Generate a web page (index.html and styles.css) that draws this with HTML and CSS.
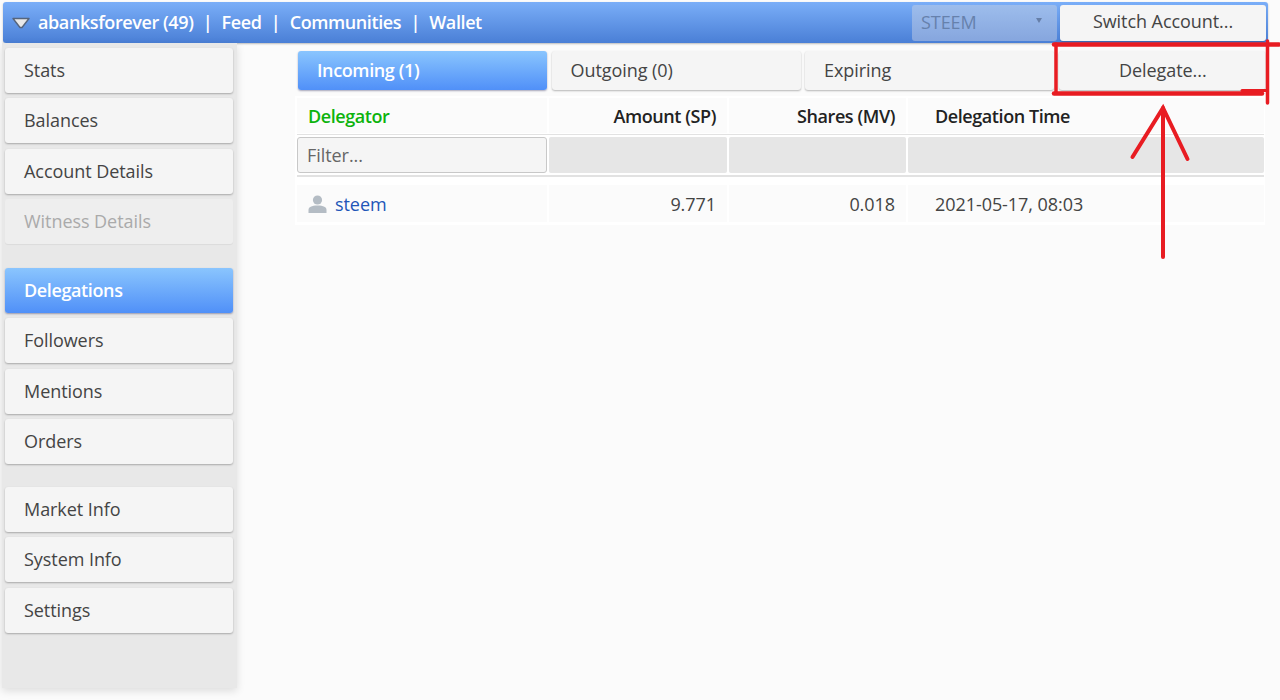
FILE: index.html
```html
<!DOCTYPE html>
<html lang="en">
<head>
<meta charset="utf-8">
<title>Delegations</title>
<link rel="stylesheet" href="styles.css">
</head>
<body>
<header class="topbar">
  <svg class="caret" width="18" height="12" viewBox="0 0 18 12"><path d="M1 1.500h16L10 10.500H8z" fill="#e9e9e9" stroke="#56657c" stroke-width="1.400" stroke-linejoin="round"/></svg>
  <nav class="topnav">
    <a>abanksforever (49)</a><span class="sep">|</span>
    <a>Feed</a><span class="sep">|</span>
    <a>Communities</a><span class="sep">|</span>
    <a>Wallet</a>
  </nav>
  <div class="chain"><span>STEEM</span><i class="chain-arrow"></i></div>
  <button class="switch">Switch Account...</button>
</header>
<div class="main">
  <aside class="sidebar">
    <div class="group">
      <a class="item">Stats</a>
      <a class="item">Balances</a>
      <a class="item">Account Details</a>
      <a class="item disabled">Witness Details</a>
    </div>
    <div class="group">
      <a class="item active">Delegations</a>
      <a class="item">Followers</a>
      <a class="item">Mentions</a>
      <a class="item">Orders</a>
    </div>
    <div class="group last">
      <a class="item">Market Info</a>
      <a class="item">System Info</a>
      <a class="item">Settings</a>
    </div>
  </aside>
  <section class="content">
    <div class="tabs">
      <a class="tab active">Incoming (1)</a>
      <a class="tab">Outgoing (0)</a>
      <a class="tab">Expiring</a>
      <a class="tab center">Delegate...</a>
    </div>
    <div class="table">
      <div class="row head">
        <div class="cell sorted">Delegator</div>
        <div class="cell right">Amount (SP)</div>
        <div class="cell right">Shares (MV)</div>
        <div class="cell time">Delegation Time</div>
      </div>
      <div class="row filters">
        <div class="fcell"><div class="filter">Filter...</div></div>
        <div class="fcell blank"></div>
        <div class="fcell blank"></div>
        <div class="fcell blank"></div>
      </div>
      <div class="row data">
        <div class="cell user">
          <svg class="avatar" width="19" height="18" viewBox="0 0 19 18"><circle cx="9.500" cy="5" r="4.600" fill="#b4bcc4"/><path d="M.5 18v-3c0-3 3-4.500 9-4.500s9 1.500 9 4.500v3z" fill="#b4bcc4"/></svg>
          <a>steem</a>
        </div>
        <div class="cell right">9.771</div>
        <div class="cell right">0.018</div>
        <div class="cell time">2021-05-17, 08:03</div>
      </div>
    </div>
  </section>
</div>
<svg class="annotation" width="1280" height="700" viewBox="0 0 1280 700" fill="none" stroke="#e81c22" stroke-linecap="round">
  <path d="M1054 44.500H1279" stroke-width="4.500"/>
  <path d="M1056 44V92" stroke-width="3.500"/>
  <path d="M1054 93.500H1262" stroke-width="4.500"/>
  <path d="M1242 90.500H1267" stroke-width="3"/>
  <path d="M1267.500 41V103" stroke-width="3.500"/>
  <path d="M1163 108V257" stroke-width="4"/>
  <path d="M1132.500 157L1163 108L1187.500 159" stroke-width="4"/>
</svg>
</body>
</html>
```
FILE: styles.css
```css
* { box-sizing: border-box; }
html, body { margin: 0; height: 700px; overflow: hidden; }
body {
  position: relative;
  background: #fbfbfb;
  font-family: "Open Sans", "Liberation Sans", sans-serif;
  font-size: 18px;
  letter-spacing: -.06px;
  color: #444;
}
.topbar {
  display: flex;
  align-items: center;
  height: 41px;
  margin: 2px 12px 0 3px;
  padding: 0 2px 0 9px;
  border-radius: 3px;
  background: linear-gradient(#7aaef8, #4a7fd6);
  box-shadow: 0 1px 2px rgba(0,0,0,.25);
}
.caret { margin-right: 8px; flex: none; }
.topnav {
  display: flex;
  gap: 9.300px;
  flex: 1;
  padding-bottom: 2px;
  color: #fff;
  font-weight: 600;
  letter-spacing: -.4px;
  white-space: nowrap;
}
.sep { font-weight: 600; }
.chain {
  display: flex;
  align-items: center;
  justify-content: space-between;
  width: 145px;
  height: 36px;
  padding: 0 15px 2px 9px;
  border-radius: 3px;
  background: linear-gradient(#9dbdec, #86a6de);
  color: #6681ac;
}
.chain-arrow {
  width: 0;
  height: 0;
  border: 3px solid transparent;
  border-top: 5px solid #667fa8;
  border-bottom: 0;
  margin-bottom: 3px;
}
.switch {
  width: 206px;
  height: 36px;
  margin-left: 3px;
  padding: 0 0 3px;
  border: 0;
  border-radius: 3px;
  background: #f5f5f5;
  font: inherit;
  letter-spacing: inherit;
  color: #444;
  box-shadow: 0 1px 1px rgba(0,0,0,.2);
}
.main { display: flex; align-items: flex-start; }
.sidebar {
  flex: none;
  display: flex;
  flex-direction: column;
  gap: 24px;
  width: 235px;
  height: 645px;
  margin: 0 0 0 2px;
  padding: 5px 4px 0 3px;
  background: #e8e8e8;
  box-shadow: 0 3px 8px rgba(0,0,0,.12);
}
.group { display: flex; flex-direction: column; gap: 5.33px; }
.group.last { margin-top: -1px; }
.item {
  display: flex;
  align-items: center;
  height: 45px;
  padding: 0 0 1px 19px;
  border-radius: 3px;
  background: #f5f5f5;
  box-shadow: 0 1px 2px rgba(0,0,0,.28);
}
.item.disabled { background: #eee; color: #aaa; box-shadow: 0 1px 1px rgba(0,0,0,.06); }
.item.active, .tab.active {
  background: linear-gradient(#8ac5fe, #5090f8);
  color: #fff;
  font-weight: 600;
  letter-spacing: -.38px;
  box-shadow: 0 1px 2px rgba(0,0,60,.35);
}
.content { flex: 1; padding: 8px 15px 0 58px; }
.tabs {
  display: grid;
  grid-template-columns: 249px 249px 249px 1fr;
  gap: 4.500px;
  margin-left: 3px;
  height: 39px;
}
.tab {
  display: flex;
  align-items: center;
  padding: 0 0 1px 19px;
  border-radius: 3px;
  background: #f5f5f5;
  box-shadow: 0 1px 2px rgba(0,0,0,.28);
}
.tab.center { justify-content: center; padding-left: 2px; }
.table {
  margin-top: 6px;
  padding: 2px 1px 3px 2px;
  background: #fff;
}
.row {
  display: grid;
  grid-template-columns: 252px 180px 179px 1fr;
  column-gap: 0;
}
.cell { display: flex; align-items: center; padding: 0 11px; background: #fbfbfb; margin-right: 2px; }
.head .cell { height: 35px; padding-top: 1px; font-weight: 600; color: #222; letter-spacing: -.42px; }
.head .cell.sorted { color: #0db30d; }
.right { justify-content: flex-end; }
.cell.time { padding-left: 27px; margin-right: 0; }
.filters {
  margin-top: 1px;
  padding: 2px 0;
  border-top: 1px solid #e2e2e2;
  border-bottom: 2px solid #e2e2e2;
}
.fcell { height: 36px; margin-right: 2px; }
.fcell:last-child { margin-right: 0; }
.fcell.blank { background: #e6e6e6; border-radius: 2px; }
.filter {
  display: flex;
  align-items: center;
  height: 100%;
  padding-left: 9px;
  border: 1px solid #c8c8c8;
  border-radius: 3px;
  background: #f5f5f5;
  color: #666;
}
.data { margin-top: 8px; }
.data .cell { height: 37px; }
.user { gap: 8px; }
.user a { color: #2255b8; }
.annotation { position: absolute; left: 0; top: 0; pointer-events: none; }
```
